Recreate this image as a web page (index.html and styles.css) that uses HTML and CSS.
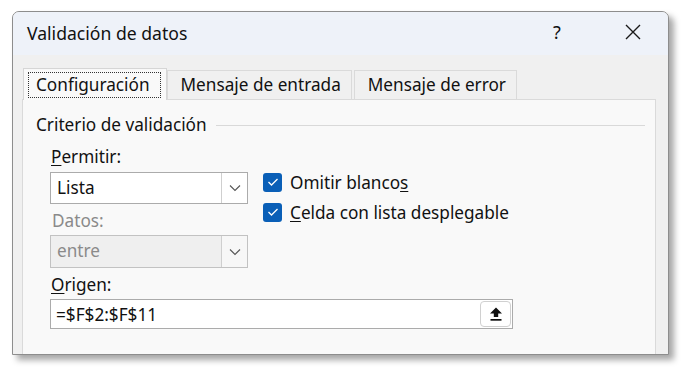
FILE: index.html
```html
<!DOCTYPE html>
<html lang="es">
<head>
<meta charset="utf-8">
<title>Validación de datos</title>
<link rel="stylesheet" href="styles.css">
</head>
<body>
<div class="page">
  <div class="dialog">
    <div class="titlebar">
      <span class="title">Validación de datos</span>
      <span class="help">?</span>
      <span class="close">
        <svg width="16" height="16" viewBox="0 0 16 16"><path d="M1 1 L15 15 M15 1 L1 15" stroke="#1a1a1a" stroke-width="1.4" fill="none"/></svg>
      </span>
    </div>
    <div class="body">
      <div class="tabs">
        <div class="tab active"><span class="focus">Configuración</span></div>
        <div class="tab">Mensaje de entrada</div>
        <div class="tab">Mensaje de error</div>
      </div>
      <div class="panel">
        <div class="group-title"><span>Criterio de validación</span><div class="rule"></div></div>
        <div class="row">
          <div class="col">
            <div class="label"><u>P</u>ermitir:</div>
            <div class="select">
              <span class="value">Lista</span>
              <span class="drop"><svg width="12" height="8" viewBox="0 0 12 8"><path d="M1 1.5 L6 6.5 L11 1.5" stroke="#555" stroke-width="1.1" fill="none"/></svg></span>
            </div>
            <div class="label disabled">Datos:</div>
            <div class="select disabled">
              <span class="value">entre</span>
              <span class="drop"><svg width="12" height="8" viewBox="0 0 12 8"><path d="M1 1.5 L6 6.5 L11 1.5" stroke="#555" stroke-width="1.1" fill="none"/></svg></span>
            </div>
          </div>
          <div class="checks">
            <div class="check">
              <span class="box"><svg width="12" height="10" viewBox="0 0 12 10"><path d="M1.5 5 L4.5 8 L10.5 2" stroke="#fff" stroke-width="1.3" fill="none"/></svg></span>
              <span>Omitir blanco<u>s</u></span>
            </div>
            <div class="check">
              <span class="box"><svg width="12" height="10" viewBox="0 0 12 10"><path d="M1.5 5 L4.5 8 L10.5 2" stroke="#fff" stroke-width="1.3" fill="none"/></svg></span>
              <span><u>C</u>elda con lista desplegable</span>
            </div>
          </div>
        </div>
        <div class="label origen"><u>O</u>rigen:</div>
        <div class="input">
          <span class="value">=$F$2:$F$11</span>
          <span class="upload"><svg width="16" height="16" viewBox="0 0 16 16"><path d="M8 1.5 L14 7.5 H10.2 V11 H5.8 V7.5 H2 Z" fill="#111"/><rect x="2.5" y="13" width="11" height="1.7" fill="#111"/></svg></span>
        </div>
      </div>
    </div>
  </div>
</div>
</body>
</html>
```
FILE: styles.css
```css
* { box-sizing: border-box; }
html, body { margin: 0; padding: 0; background: #fff; }
body {
  font-family: "Noto Sans", "Open Sans", "DejaVu Sans", sans-serif;
  color: #111;
  width: 689px;
  height: 374px;
  overflow: hidden;
}
.page { padding: 11px 0 0 12px; }
.dialog {
  width: 657px;
  height: 344px;
  border: 1px solid #8d8d8d;
  border-radius: 7px 7px 0 0;
  background: #f0f0f0;
  box-shadow: 5px 5px 6px rgba(0,0,0,0.35);
  display: flex;
  flex-direction: column;
  overflow: hidden;
}
.titlebar {
  height: 43px;
  flex: none;
  background: #eef2f9;
  display: flex;
  align-items: center;
  padding-left: 14px;
}
.title { font-size: 17.6px; flex: 1; margin-top: -2px; }
.help { font-size: 18px; width: 12px; margin-right: 60px; margin-top: -4px; }
.close { width: 16px; height: 16px; margin-right: 27px; margin-top: -4px; display: flex; }
.body {
  flex: 1;
  padding: 13px 12px 0 9px;
  display: flex;
  flex-direction: column;
  font-size: 17.2px;
}
.tabs { display: flex; align-items: flex-end; height: 31px; padding-left: 1px; position: relative; z-index: 1; }
.tab {
  height: 29px;
  padding: 0 10px 0 13px;
  display: flex;
  align-items: center;
  border: 1px solid #dadada;
  border-bottom: none;
  background: #f0f0f0;
  margin-right: 2px;
  line-height: 20px;
}
.tab.active {
  height: 32px;
  margin-bottom: -1px;
  background: #f9f9f9;
  padding: 0 5px 0 4px;
  margin-right: 0;
  border-color: #d6d6d6;
}
.focus {
  border: 1px dotted #333;
  padding: 1px 10px 2px 7px;
  line-height: 21px;
}
.panel {
  flex: 1;
  background: #f9f9f9;
  border: 1px solid #dadada;
  border-bottom: none;
  padding: 15px 10px 0 13px;
}
.group-title { display: flex; align-items: center; height: 20px; line-height: 20px; }
.rule { flex: 1; height: 1px; background: #d9d9d9; margin-left: 9px; margin-top: 0; }
.row { display: flex; margin-top: 12px; padding-left: 14px; }
.col { width: 198px; }
.label { height: 20px; line-height: 20px; margin-bottom: 5px; padding-left: 1px; }
.label.disabled { color: #8a8a8a; margin-top: 7px; margin-bottom: 4px; padding-left: 2px; }
.label u, .check u { text-decoration-thickness: 1px; text-underline-offset: 2px; }
.select {
  height: 32px;
  border: 1px solid #ababab;
  background: #fff;
  display: flex;
  align-items: stretch;
}
.select .value { flex: 1; padding-left: 6px; line-height: 30px; }
.select .drop {
  width: 26px;
  border-left: 1px solid #cfcfcf;
  display: flex;
  align-items: center;
  justify-content: center;
  background: #fff;
}
.select.disabled { background: #efefef; border-color: #c2c2c2; color: #8a8a8a; height: 33px; }
.select.disabled .drop { background: #f7f7f7; }
.checks { margin-left: 15px; padding-top: 25px; }
.check { display: flex; align-items: center; height: 20px; margin-bottom: 10px; }
.box {
  width: 19px;
  height: 19px;
  border-radius: 3px;
  background: #0a5fb7;
  display: flex;
  align-items: center;
  justify-content: center;
  margin-right: 8px;
}
.origen { margin-top: 7px; margin-left: 14px; margin-bottom: 4px; }
.input {
  margin-left: 14px;
  width: 463px;
  height: 30px;
  border: 1px solid #ababab;
  background: #fff;
  display: flex;
  align-items: center;
}
.input .value { flex: 1; padding-left: 5px; }
.upload {
  width: 31px;
  height: 26px;
  border: 1px solid #d0d0d0;
  border-radius: 4px;
  background: #fff;
  display: flex;
  align-items: center;
  justify-content: center;
  margin-right: 1px;
}
```
